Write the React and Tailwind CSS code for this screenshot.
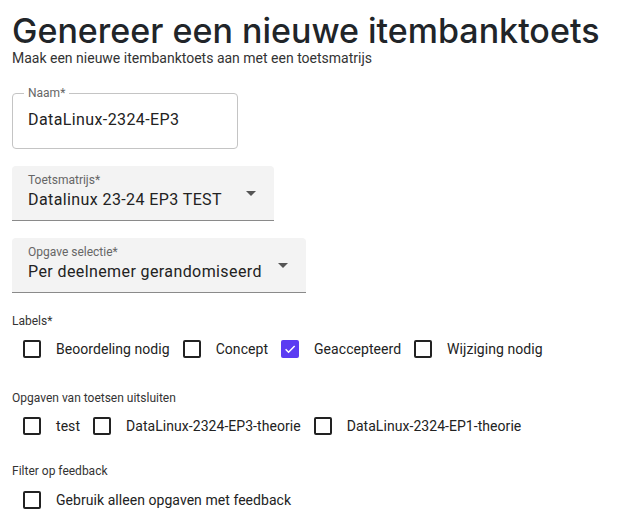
import { useState } from "react";

const Box = ({ checked, onClick }) => (
  <span
    onClick={onClick}
    className={`w-[18px] h-[18px] rounded-[2px] flex items-center justify-center shrink-0 ${
      checked ? "bg-[#5b3cf2]" : "border-2 border-[#222]"
    }`}
  >
    {checked && (
      <svg width="14" height="14" viewBox="0 0 24 24" fill="none" stroke="white" strokeWidth="2.6">
        <path d="M4.5 12.5l5 5L20 7" />
      </svg>
    )}
  </span>
);

const Check = ({ label, checked, onClick }) => (
  <label className="flex items-center h-[40px] cursor-pointer">
    <span className="w-[40px] flex justify-center">
      <Box checked={checked} onClick={onClick} />
    </span>
    <span className="pl-[4px] pr-[2px] text-[14px] text-[#222] tracking-[0.05px]">{label}</span>
  </label>
);

const Select = ({ label, value, width }) => (
  <div className={`${width} h-[55px] bg-[#f3f3f3] rounded-t-[4px] border-b border-[#8a8a8a] relative px-[16px] pt-[6px]`}>
    <div className="text-[12px] text-[#666] leading-[16px]">{label}</div>
    <div className="text-[16px] text-[#222] leading-[24px] tracking-[0.4px]">{value}</div>
    <svg className="absolute right-[18px] top-[25px]" width="10" height="5" viewBox="0 0 10 5">
      <path d="M0 0l5 5 5-5z" fill="#555" />
    </svg>
  </div>
);

export default function App() {
  const [labels, setLabels] = useState({ b: false, c: false, g: true, w: false });
  const [excl, setExcl] = useState({ t: false, e3: false, e1: false });
  const [fb, setFb] = useState(false);

  return (
    <div className="bg-white min-h-screen px-[12px] pt-[9px]" style={{ fontFamily: "Roboto, 'Noto Sans', sans-serif" }}>
      <h1 className="text-[34px] leading-[44px] font-medium text-[#212529]" style={{ fontFamily: "Inter, sans-serif" }}>
        Genereer een nieuwe itembanktoets
      </h1>
      <p className="text-[14px] text-[#333] leading-[16px] -mt-[3px]">Maak een nieuwe itembanktoets aan met een toetsmatrijs</p>

      <div className="mt-[27px] w-[226px] h-[56px] border border-[#c4c4c4] rounded-[4px] relative">
        <span className="absolute -top-[8px] left-[11px] px-[4px] bg-white text-[12px] text-[#666] leading-[14px]">Naam*</span>
        <div className="text-[16px] text-[#222] px-[15px] leading-[24px] pt-[14px] tracking-[0.4px]">DataLinux-2324-EP3</div>
      </div>

      <div className="mt-[17px]">
        <Select label="Toetsmatrijs*" value="Datalinux 23-24 EP3 TEST" width="w-[262px]" />
      </div>
      <div className="mt-[17px]">
        <Select label="Opgave selectie*" value="Per deelnemer gerandomiseerd" width="w-[294px]" />
      </div>

      <div className="mt-[20px] text-[12px] text-[#333] leading-[16px]">Labels*</div>
      <div className="flex flex-wrap">
        <Check label="Beoordeling nodig" checked={labels.b} onClick={() => setLabels({ ...labels, b: !labels.b })} />
        <Check label="Concept" checked={labels.c} onClick={() => setLabels({ ...labels, c: !labels.c })} />
        <Check label="Geaccepteerd" checked={labels.g} onClick={() => setLabels({ ...labels, g: !labels.g })} />
        <Check label="Wijziging nodig" checked={labels.w} onClick={() => setLabels({ ...labels, w: !labels.w })} />
      </div>

      <div className="mt-[21px] text-[12px] text-[#333] leading-[16px]">Opgaven van toetsen uitsluiten</div>
      <div className="flex flex-wrap">
        <Check label="test" checked={excl.t} onClick={() => setExcl({ ...excl, t: !excl.t })} />
        <Check label="DataLinux-2324-EP3-theorie" checked={excl.e3} onClick={() => setExcl({ ...excl, e3: !excl.e3 })} />
        <Check label="DataLinux-2324-EP1-theorie" checked={excl.e1} onClick={() => setExcl({ ...excl, e1: !excl.e1 })} />
      </div>

      <div className="mt-[17px] text-[12px] text-[#333] leading-[16px]">Filter op feedback</div>
      <div className="flex flex-wrap mt-[1px]">
        <Check label="Gebruik alleen opgaven met feedback" checked={fb} onClick={() => setFb(!fb)} />
      </div>
    </div>
  );
}
